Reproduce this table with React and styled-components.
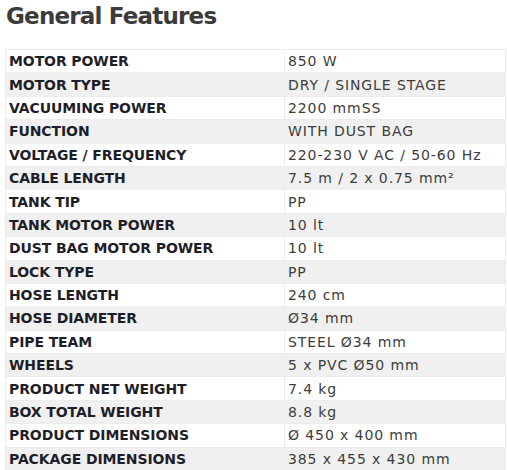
import React from 'react';
import styled, { createGlobalStyle } from 'styled-components';

const GlobalStyle = createGlobalStyle`
  html, body {
    margin: 0;
    padding: 0;
    background: #ffffff;
  }
  body {
    font-family: 'DejaVu Sans', 'Open Sans', sans-serif;
  }
`;

const Wrapper = styled.div`
  width: 507px;
  padding: 0 1px 0 5px;
  box-sizing: border-box;
`;

const Heading = styled.h2`
  margin: 0;
  padding: 0 0 0 1px;
  height: 49px;
  line-height: 32px;
  font-size: 23px;
  font-weight: 700;
  color: #3b3b3b;
  letter-spacing: -0.8px;
`;

const Table = styled.table`
  width: 100%;
  border-collapse: collapse;
  border: 1px solid #ececec;
`;

const Row = styled.tr`
  background: ${({ $striped }) => ($striped ? '#f0f0f0' : '#ffffff')};
`;

const Cell = styled.td`
  height: 23.4px;
  padding: 0 3px;
  box-sizing: border-box;
  border: 1px solid #ececec;
  font-size: 14px;
  line-height: 18px;
  white-space: nowrap;
  color: ${({ $label }) => ($label ? '#1e1e28' : '#3d3d3d')};
  font-weight: ${({ $label }) => ($label ? 700 : 400)};
  letter-spacing: ${({ $label }) => ($label ? '-0.1px' : '0.9px')};
  width: ${({ $label }) => ($label ? '279px' : 'auto')};
`;

const features = [
  ['MOTOR POWER', '850 W'],
  ['MOTOR TYPE', 'DRY / SINGLE STAGE'],
  ['VACUUMING POWER', '2200 mmSS'],
  ['FUNCTION', 'WITH DUST BAG'],
  ['VOLTAGE / FREQUENCY', '220-230 V AC / 50-60 Hz'],
  ['CABLE LENGTH', '7.5 m / 2 x 0.75 mm²'],
  ['TANK TIP', 'PP'],
  ['TANK MOTOR POWER', '10 lt'],
  ['DUST BAG MOTOR POWER', '10 lt'],
  ['LOCK TYPE', 'PP'],
  ['HOSE LENGTH', '240 cm'],
  ['HOSE DIAMETER', 'Ø34 mm'],
  ['PIPE TEAM', 'STEEL Ø34 mm'],
  ['WHEELS', '5 x PVC Ø50 mm'],
  ['PRODUCT NET WEIGHT', '7.4 kg'],
  ['BOX TOTAL WEIGHT', '8.8 kg'],
  ['PRODUCT DIMENSIONS', 'Ø 450 x 400 mm'],
  ['PACKAGE DIMENSIONS', '385 x 455 x 430 mm'],
];

export default function App() {
  return (
    <>
      <GlobalStyle />
      <Wrapper>
        <Heading>General Features</Heading>
        <Table>
          <tbody>
            {features.map(([label, value], i) => (
              <Row key={label} $striped={i % 2 === 1}>
                <Cell $label>{label}</Cell>
                <Cell>{value}</Cell>
              </Row>
            ))}
          </tbody>
        </Table>
      </Wrapper>
    </>
  );
}
